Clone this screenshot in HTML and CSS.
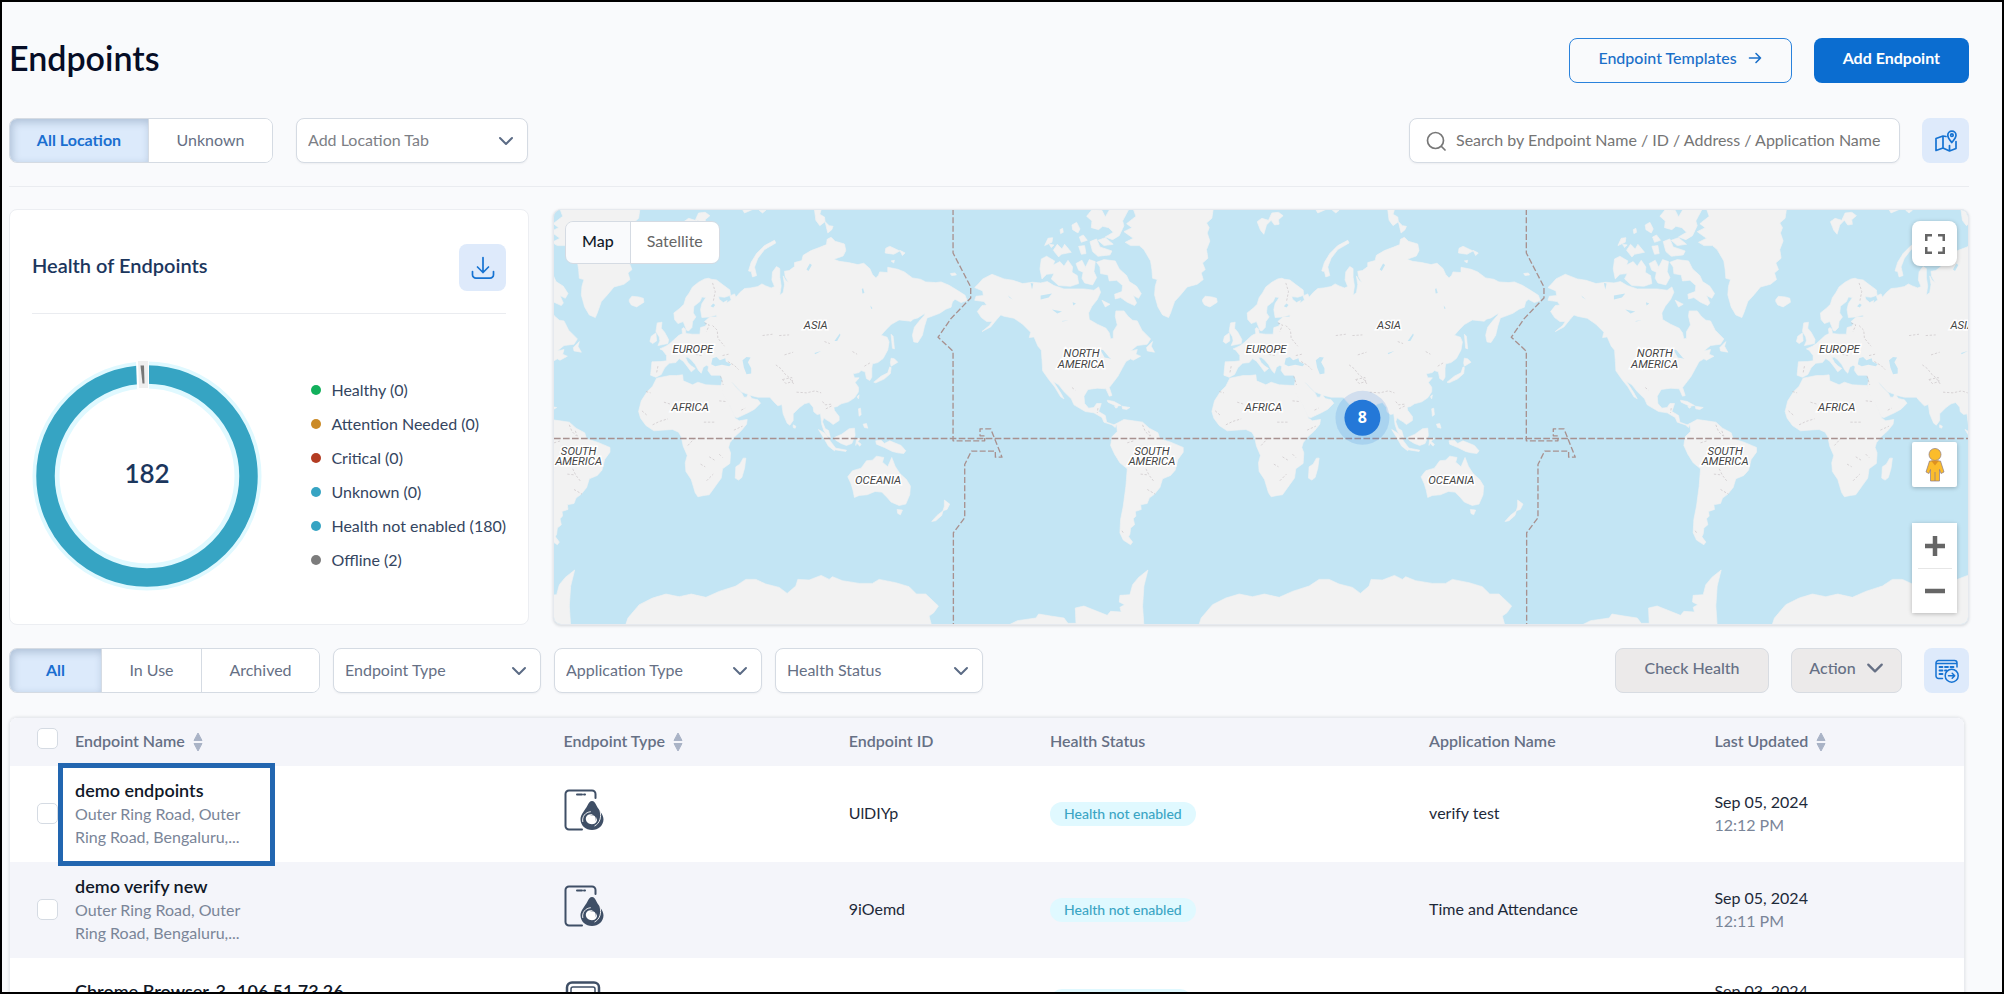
FILE: index.html
```html
<!DOCTYPE html>
<html lang="en">
<head>
<meta charset="utf-8">
<title>Endpoints</title>
<link rel="stylesheet" href="styles.css">
</head>
<body>
<svg class="defs" aria-hidden="true">
  <defs>
    <symbol id="chevron" viewBox="0 0 16 16"><path d="M2 5l6 6 6-6" fill="none" stroke="currentColor" stroke-width="2" stroke-linecap="round" stroke-linejoin="round"/></symbol>
    <symbol id="sort" viewBox="0 0 10 20"><path d="M5 1l4 7.500H1zM5 19l4-7.500H1z" fill="currentColor" stroke="currentColor" stroke-linejoin="round"/></symbol>
    <symbol id="device" viewBox="0 0 40 42">
      <path d="M31.500 9V5a3.500 3.500 0 0 0-3.500-3.500H5A3.500 3.500 0 0 0 1.500 5v32A3.500 3.500 0 0 0 5 40.500h13" fill="none" stroke="currentColor" stroke-width="2" stroke-linecap="round"/>
      <path d="M13 5.500h5M20 5.500h1" stroke="currentColor" stroke-width="2" stroke-linecap="round"/>
      <path fill="currentColor" d="M28 12c2 0 3.200 2 4.600 4.800 2.300 4.500 6.900 8.700 6.900 13.400C39.500 36.500 34.300 41 28 41S16.500 36.500 16.500 30.200c0-4.700 4.500-8.900 6.800-13.400C24.800 14 26 12 28 12z"/>
      <path fill="#fff" d="M29 25.500c-3 1-4.200 2.600-4.200 4.400 0 1.800 1.400 2.900 3.200 2.900 2.600 0 4.800-1.500 4.600-4.800 1.500 4.200-1 7.200-4.600 7.200-3.800 0-6.200-2.400-6.200-5.400 0-3.300 3-5.300 7.200-4.300z"/>
      <circle cx="28" cy="30" r="3.800" fill="#fff"/>
      <path d="M18.800 33c-1-5.500 2.500-9.800 8-10.300M36 21.500c1.800 7-.5 13-5.500 15.500" fill="none" stroke="#fff" stroke-width=".9"/>
    </symbol>
    <g id="world">
      <g transform="translate(-24 -30)">
        <path d="M318 487l27-1 17-2v-16l-12-16-8-4 18-8 12-8 13-12 13-12 12-6-2-14 4-4 6 4 2 14 20 2h22l2-20 14-4 6-8-8-6 16-14h20v-6l-22 6-22 2-4-24 4-18 12-18-12-2-6 14-18 14-2 20 8 12-10 14-2 18-10 10-6-2-10-26-16 6-10-12-2-20 18-14 12-12 6-20 10-14 10-18 18-14 18-10 12-2 8 3 16 2 18 14 22 16 2 16-18 6-18-2 2 8 12 10 12-6-2 8 14-10-4-12 14-6 4 10 12-14 14-12 18-2 22-4 12-8 12 6 16 6 10-4-8-20 2-24 12-16 10 6v26l4 26-4 28 10-8 4-24-4-26 8 14 8 6-10-18-2-16 14-2 16-12v-12l22-6 4-16 24-14 26-10 20-8 2-16 12-6 12 12 28 8 4 20-8 16-28 10 16 6 28 4 28 6 18-4 18 16 8 18 10 10 8-8 4-10 24 2v-16l30 6 20 8 24 18 24 4 16 8 30 2 16-2 24 10 26 16 22 14 6 16-18 6-18-10-8 8-4 16-16 6-18 12-26 10-12 4-8 26-6 26-14 22-12-2-4-20 6-24 14-18 16-18 2-6-22 14-14 4-6 6-36-4-24 14-16 16-14 16 18 6 6 14-4 24-14 26-16 12-16 4-2 14v26l-6 10-10-6-4-20-12-4-6 6-18 4 4 12h14l-12 14 10 14v14l-12 18-18 12-22 6-12 8-10 2 2 10 14 18v12l-18 12-10-8-10-6-8-6-4 12 8 20 10 6 6 22-10-6-10-16-6-18-4-32-10 2-10-8-2-14-12-14-14 4-16 12-18 18v20l-10 14-8-6-12-28-4-28-12 4-12-12-12-14h-36l-24-6-10-4-16-6-24-26-6-4 14 16 18 18 6 12h8l6-10 10 14 18 4 8 10-18 18-18 10-34 16-8-4-14-32-16-24-12-20v-12l6-24-6-12h-28l-10-14 2-12-6-4-10 6-6 18-8-8-10-18-12-14-10-8h-8l8 16 10 10 12 8-12 10-10-14-14-18-12-8-10 12-20 2-14 14-10 20-16 8-16-6z"/>
        <path d="M372 528h20l18-2 2 18 28 12 16-8 24 8 44 2 8 26 16 26 12 26 8 20 12 8 24-4-2 14-16 20-20 18-14 18-4 14 6 16-2 32-22 16-4 28-16 22-20 28-16 2-18 4-8-12-12-40-16-24-2-26 6-22-12-28-6-28-8-14-18-8-32 2-24 2-24-16-16-22-6-20 8-32 18-28 16-16 12-24z"/>
        <path d="M334 370l14-2-2 18 10 12 12 22-2 12-30 6 6-14-2-12-10-16zM330 400l-14 10-4 16 8 6 12-8zM250 300l8-10 20 2 14 4 2 12-22 14-16-6-6-10zM608 214l8-26 16-26 24-24 30-16 4 8-34 20-20 26-10 26 6 26-12 4-4-16zM600 776l-4 30-8 28-10 8-10-6 2-34 12-8 10-18zM414 66l14-10 20 6 10-22 20-2 14 10-14 12 2 14-14 2-10-14-14 14-8 28-10-12zM806 30h20l-4 14 14 8 2 14-16 12-12-16zM838 66l12 12 12 2-4 10-12 10zM1020 146l12-6 30 14-18 10-26-4zM1062 152l16 8-8 8zM1036 184l10-2-2 8zM1214 222l14-2 4 6-14 2zM590 30l34-2-28 12zM640 32h20l-10 8zM742 676l8 4-2 6-6-2zM818 690l20 12 18 26 12 16-2 10-18-14-14-24zM860 744l20 4 22 4-2 4-38-6zM866 714l22-10 22-16 16-2 2 22-10 24-16 6-16-6-16-10zM932 718l14-2-10 10 10 8-4 6-10-10-2 8zM938 628l6-2 2 20-6 4zM952 674l10-2 4 14-10-2zM934 592l6-6-2 12zM1036 504l-2 18-18 16-26 12-6-2 22-18 20-10 6-18zM1036 476l10 2 10 10-20 12-2-10zM1036 404l6 6 4 38-6-2zM990 724l16-2 10 10 16-8 34 14 14 16-6 8-18-2-16-4-24-12-24-10z"/>
        <path d="M906 832l14-18 26-8 16-22 18-2 12-12 22 4-4 14 16 14 12-28 10 26 14 22 20 18 12 20-2 26-12 28-20 4-24-10-12-14-16-16-20-2-24 10-24 2-14 6-4-20-6-20zM1054 930l16 2-6 14-8-4zM1196 902l16 12-8 16-12 4 4-14zM1192 934l-4 14-18 16-12 2 16-18z"/>
        <path d="M238 1280l8-24 34-40 40-20 40-12 40 8 36-8 44 10 40-18 50-16 30-20h30l30 14 40 10 24 18 26-22 6-20 34 2 36-14 24 12 10-8 30 12 50 8h40l20-12 50 10 40 12 22 22h28l38 36-14 20-14 10 8 30z"/>
        <g class="water">
          <path d="M496 494l4-18 12-4 10 10 16-6 2 10 16 8-6 6-22-4-20 4zM590 482l12-10 12 2-8 14 10 18v16l-14 2-8-20zM494 320l8-8 6 4-6 8zM866 424l16-22 2 4-10 18zM948 268l4-2 4 14-6 2zM974 318l6 8-4 2zM806 460l20-6-18 10zM782 210l10-18 6 4-10 18zM520 236l6-6 2 6z"/>
        </g>
        <path class="borders" d="M500 250l8 26-6 30M476 370l14 6-8 20M500 378l14 14 2 24 20 24M430 450l14 14 26 4M546 486l20 12 12 12M530 468l18-4M524 530l8 26M650 408l30-4M700 408l30-2M690 496l16 12 10 14 14 12 14 20M710 540l28-6 2 12-20 6zM752 578l30 2 26-6 18 6M716 466l26-8M836 426l16 6M920 456l14 8M956 500l20-12M300 576l14 4M354 608l20 6M288 634l16 14M320 676l20-10 26-8M474 668h32M520 604l20 2M564 692l26-12M426 738l20-22M482 844l20-20M490 772l16 10M464 794l14 8M520 764l10 10M586 632l12-6M830 606l8 10 18-2M840 628l20-10M336 500l-4 20"/>
      </g>
      <g transform="translate(1191 -30)">
        <path d="M84 252l12-14 28-14 36 14 26 4 30 10 30-4 24 2 20-4 20 12 30 10h60l30 4 14-10 6 16-10 22-16 20-10 20 2 20 24 14 26 12 10 14 4 18 8-2v-20l12-20-6-26 2-16h24l12 16 14 12 14 2 14 28 26 26-10 16-30 4-20 16 20-4-4 14 14 6-22 12-8-4-14 8-12 22-12 22-12 16-14 18 8 24-8 2-10-22-26-2-28 4-12 20 2 22 12 14 16-2 8-12h14l-8 24 20 12 4 20 22 8 8-4-4 12-10-8-24-8-6-14-24-14-26-4-34-20-8-18-22-22-16-20-16-10 22 34 10 18-10-6-18-30-16-20-20-28-2-34-2-28-10-12-12-28-14 2 4-16-24-24-26-18-30-6-10-4-12 14-18 22-26 14 22-18 8-12h-16l-16-12-12-18 14-18 14-2-8-10-28-4 4-12 22-2-2-14-24-10z"/>
        <path d="M498 672l22-12 28 4 28 4 20 18 26 14 6 18 32 10 38 16v14l-16 22-8 32-14 16-24 10-8 26-16 20-16 12-6 16-20 4 2 14-18 6 2 14-8 8 4 18-12 10-2 18-4 8 12 16-6 8-22-14-10-22 2-40 8-40 8-60 4-52-22-18-16-26-12-26 4-26 16-16z"/>
        <path d="M548 28h240l-4 28-16 14 8 14-6 16 8 24-10 26 4 26-16 14 8 20-12 10 6 20-18 14-30 8-20 24-18 20-12 34-6 14-18-8-14-24-10-36 2-26 6-20-14-4-2-26-4-26-20-34-14-12h-26l-16-10 24-12-28-20 24-12-16-12 28-22zM408 50l16-20 30 2 10 20 14-24 56 2-18 34 4 14-14 30-20 12-22-8 24-14-14-14-18-4-12 10-22-6 2-20zM364 76l14-8 10 20-6 12-16-10zM328 90l8-4 2 12-8 4zM282 138l10-22 14-2-2 14zM296 134l14 2-8 8zM308 152l12-18 14 14 8-14 20 24-30 6-8 8zM386 112l12-6 12 16-18 6zM384 140l18-2 4 24-14 2zM418 126l20-8 10 24 36 12-6 12-36 4-16-14zM442 122l22-8 24 20-28 4zM268 208l4-30 16-8 24 14-4 12 20-10 12 14 12-18 14 20-2 16 16 10 4 24-24 8-36-2-22-20 8-16-22 2-14 14zM376 192l18-10 10 20-6 16-14-6zM398 216l18-36 18 6-4 30 8 18-12 22-24-6-8-14zM438 188l22-8 34 4 12 24 22 20 8 18 22 14 14 22-8 14-16-8 10 22-6 8-22-10-20-14-16 4-2-14 22-8 2-18-18-16-22 2-4-18-22-4-2-20zM454 302l24 12-14 8zM588 444l18-18-4 14 10 18-22-4zM470 602l20 4 22 12-14 2-26-12zM514 620l24 4-10 6-12-2zM492 620l10 2-6 4z"/>
        <path d="M168 1280l32-16 56-8 8-12 36 6 40 6 12 16h24l-2-46 26-6 30 12 40 16 10-12 32 2-4-14 14-8-16-8 2-20 30-2 8-30 18-22 28-22-12 48-4 60 4 60z"/>
        <g class="water"><path d="M270 288l34-6-10 12-24 6zM304 330l30 6-14 6zM334 364l20-2-18 4zM172 288l14 12-10-6zM448 448l10 4 18 22 6 4-20-4zM366 308l10 4-8 6zM240 250l4 20 4-18z"/></g>
        <path class="borders" d="M576 676l8 20 14 14M594 694l6 16M586 808l10 20 14 18M570 824l20 2M590 870l24 14M364 564l10 8M442 626l-2 14M514 994l4 6M530 730l20-6"/>
        <path class="dateline" d="M7 28v132l53 102v33L0 358l-38 55 45 42v269h95v-15H88v-21h32l34 85h-20v-18H62l-20 40v160L8 1000v280"/>
      </g>
    </g>
  </defs>
</svg>

<main class="page">
  <header class="page-head">
    <h1>Endpoints</h1>
    <div class="head-actions">
      <a class="btn btn-outline" href="#templates">Endpoint Templates
        <svg class="icon-sm" viewBox="0 0 16 16"><path d="M2.500 8h11M9 3.500L13.500 8 9 12.500" fill="none" stroke="currentColor" stroke-width="1.600" stroke-linecap="round" stroke-linejoin="round"/></svg>
      </a>
      <button class="btn btn-primary" type="button">Add Endpoint</button>
    </div>
  </header>

  <section class="toolbar toolbar-top">
    <div class="tabs">
      <button class="tab tab-location active" type="button">All Location</button>
      <button class="tab tab-unknown" type="button">Unknown</button>
    </div>
    <div class="select-box select-location">
      <select aria-label="Add Location Tab"><option>Add Location Tab</option></select>
      <svg><use href="#chevron"/></svg>
    </div>
    <label class="search">
      <svg viewBox="0 0 20 20"><circle cx="9.500" cy="9.500" r="8" fill="none" stroke="currentColor" stroke-width="1.700"/><path d="M15.500 15.500l3.500 3.500" stroke="currentColor" stroke-width="1.700" stroke-linecap="round"/></svg>
      <input type="search" aria-label="Search" placeholder="Search by Endpoint Name / ID / Address / Application Name">
    </label>
    <button class="icon-btn" type="button" aria-label="Toggle map">
      <svg viewBox="0 0 24 24" fill="none" stroke="currentColor" stroke-width="1.700" stroke-linejoin="round" stroke-linecap="round"><path d="M12 7.500L9 7 2 9.500v12L9 19l6.500 3 6.500-2.500v-7M9 7v12M15.500 16.500V22"/><path d="M17.800 13.500c-1.500-2-4-4.500-4-7.300a4.100 4.100 0 0 1 8.200 0c0 2.800-2.700 5.300-4.200 7.300z"/><circle cx="17.900" cy="6.200" r="1.300"/></svg>
    </button>
  </section>

  <section class="overview">
    <article class="card">
      <header class="card-head">
        <h2>Health of Endpoints</h2>
        <button class="icon-btn" type="button" aria-label="Download">
          <svg viewBox="0 0 24 24" fill="none" stroke="currentColor" stroke-width="1.700" stroke-linecap="round" stroke-linejoin="round"><path d="M12 1.500v15M6.500 11l5.500 5.500 5.500-5.500M1.500 15.500v3.200a3.500 3.500 0 0 0 3.500 3.500h14a3.500 3.500 0 0 0 3.500-3.500v-3.200"/></svg>
        </button>
      </header>
      <div class="health">
        <svg class="donut" viewBox="0 0 230 230" role="img" aria-label="182 endpoints">
          <circle cx="115" cy="115" r="101" fill="none" stroke="#e0f9ff" stroke-width="27"/>
          <circle cx="115" cy="115" r="101.500" fill="none" stroke="#36a4c3" stroke-width="18.500"/>
          <path d="M104 0h13v28h-12z" fill="#fff"/>
          <path d="M106 0h10v27h-9z" fill="#efefef"/>
          <path d="M108.500 4.500h3.500l.5 18h-2z" fill="#777"/>
          <text x="115" y="122" text-anchor="middle">182</text>
        </svg>
        <ul class="legend">
          <li><i class="dot green"></i>Healthy (0)</li>
          <li><i class="dot amber"></i>Attention Needed (0)</li>
          <li><i class="dot red"></i>Critical (0)</li>
          <li><i class="dot teal"></i>Unknown (0)</li>
          <li><i class="dot teal"></i>Health not enabled (180)</li>
          <li><i class="dot gray"></i>Offline (2)</li>
        </ul>
      </div>
    </article>

    <div class="map">
      <svg class="map-canvas" viewBox="0 0 4245 1245" preserveAspectRatio="xMidYMid slice">
        <g class="land">
          <use href="#world" x="-1721"/><use href="#world"/><use href="#world" x="1721"/><use href="#world" x="3442"/>
        </g>
        <path class="dateline equator" d="M0 687h4245"/>
        <g class="labels">
          <text x="786" y="357">ASIA</text><text x="417" y="431">EUROPE</text><text x="409" y="605">AFRICA</text><text x="973" y="824">OCEANIA</text>
          <text x="74" y="736">SOUTH</text><text x="74" y="766">AMERICA</text>
          <text x="1584" y="441">NORTH</text><text x="1583" y="474">AMERICA</text>
          <text x="1795" y="736">SOUTH</text><text x="1795" y="766">AMERICA</text>
          <text x="2507" y="357">ASIA</text><text x="2138" y="431">EUROPE</text><text x="2130" y="605">AFRICA</text><text x="2694" y="824">OCEANIA</text>
          <text x="3305" y="441">NORTH</text><text x="3304" y="474">AMERICA</text>
          <text x="3516" y="736">SOUTH</text><text x="3516" y="766">AMERICA</text>
          <text x="4228" y="357">ASIA</text><text x="3859" y="431">EUROPE</text><text x="3851" y="605">AFRICA</text>
        </g>
        <circle cx="2427" cy="625" r="81" fill="#2478d8" opacity=".16"/>
        <circle cx="2427" cy="625" r="54" fill="#2478d8"/>
        <text class="cluster" x="2427" y="640">8</text>
      </svg>
      <div class="map-type">
        <button class="on" type="button">Map</button><button type="button">Satellite</button>
      </div>
      <div class="map-controls">
        <button class="map-btn fullscreen" type="button" aria-label="Fullscreen"><svg viewBox="0 0 20 20" fill="none" stroke="#666" stroke-width="2.500"><path d="M1.250 7V1.250H7M13 1.250h5.750V7M18.750 13v5.750H13M7 18.750H1.250V13"/></svg></button>
        <button class="map-btn pegman" type="button" aria-label="Street view"><svg viewBox="0 0 20 34" fill="#fbbc2b" stroke="#8a7a8a" stroke-width=".7"><path d="M4.500 13h11l3.500 11-3 1.500-1.500-4V33h-9V21.500l-1.500 4-3-1.500z"/><path d="M10 24v9"/><circle cx="10" cy="6.500" r="6"/><path d="M6 12.500h8l-4 5z" fill="#dd9120" stroke="none"/></svg></button>
        <div class="zoom">
          <button type="button" aria-label="Zoom in"><svg viewBox="0 0 20 20"><path d="M0 10h20M10 0v20" stroke="#666" stroke-width="4.500"/></svg></button>
          <button type="button" aria-label="Zoom out"><svg viewBox="0 0 20 20"><path d="M0 10h20" stroke="#666" stroke-width="4.500"/></svg></button>
        </div>
      </div>
    </div>
  </section>

  <section class="toolbar toolbar-list">
    <div class="tabs">
      <button class="tab tab-all active" type="button">All</button>
      <button class="tab tab-use" type="button">In Use</button>
      <button class="tab tab-archived" type="button">Archived</button>
    </div>
    <div class="select-box"><select aria-label="Endpoint Type"><option>Endpoint Type</option></select><svg><use href="#chevron"/></svg></div>
    <div class="select-box"><select aria-label="Application Type"><option>Application Type</option></select><svg><use href="#chevron"/></svg></div>
    <div class="select-box"><select aria-label="Health Status"><option>Health Status</option></select><svg><use href="#chevron"/></svg></div>
    <div class="list-actions">
      <button class="btn btn-muted btn-check" type="button">Check Health</button>
      <button class="btn btn-muted btn-action" type="button">Action <svg class="icon-md"><use href="#chevron"/></svg></button>
      <button class="icon-btn" type="button" aria-label="Export list">
        <svg viewBox="0 0 24 24" fill="none" stroke="currentColor" stroke-width="1.500" stroke-linecap="round" stroke-linejoin="round"><path d="M7.500 19.500H3.500a2.500 2.500 0 0 1-2.500-2.500V4a2.500 2.500 0 0 1 2.500-2.500h16A2.500 2.500 0 0 1 22 4v4M1 4.500h21"/><path d="M4.500 8h3M10 8h3M15.500 8h3M4.500 11.500h3M10 11.500h1.500M4.500 15h3" stroke-width="1.800"/><circle cx="16.700" cy="16.700" r="6.500"/><path d="M13.500 16.700h6M17.200 14.200l2.500 2.500-2.500 2.500"/></svg>
      </button>
    </div>
  </section>

  <div class="table-card">
    <table>
      <colgroup><col class="c-check"><col class="c-name"><col class="c-type"><col class="c-id"><col class="c-health"><col class="c-app"><col></colgroup>
      <thead>
        <tr>
          <th><input type="checkbox" aria-label="Select all"></th>
          <th>Endpoint Name <svg class="sort"><use href="#sort"/></svg></th>
          <th>Endpoint Type <svg class="sort"><use href="#sort"/></svg></th>
          <th>Endpoint ID</th>
          <th>Health Status</th>
          <th>Application Name</th>
          <th>Last Updated <svg class="sort"><use href="#sort"/></svg></th>
        </tr>
      </thead>
      <tbody>
        <tr>
          <td><input type="checkbox" aria-label="Select demo endpoints"></td>
          <td class="name-cell"><span class="highlight"></span><strong>demo endpoints</strong><span class="sub">Outer Ring Road, Outer<br>Ring Road, Bengaluru,...</span></td>
          <td class="device-cell"><svg class="device"><use href="#device"/></svg></td>
          <td>UlDIYp</td>
          <td class="badge-cell"><span class="badge">Health not enabled</span></td>
          <td>verify test</td>
          <td>Sep 05, 2024<span class="sub">12:12 PM</span></td>
        </tr>
        <tr>
          <td><input type="checkbox" aria-label="Select demo verify new"></td>
          <td class="name-cell"><strong>demo verify new</strong><span class="sub">Outer Ring Road, Outer<br>Ring Road, Bengaluru,...</span></td>
          <td class="device-cell"><svg class="device"><use href="#device"/></svg></td>
          <td>9iOemd</td>
          <td class="badge-cell"><span class="badge">Health not enabled</span></td>
          <td>Time and Attendance</td>
          <td>Sep 05, 2024<span class="sub">12:11 PM</span></td>
        </tr>
        <tr class="short">
          <td></td>
          <td class="name-cell"><strong>Chrome Browser-3 -106.51.73.26</strong><span class="sub">&nbsp;</span></td>
          <td class="device-cell"><svg class="device" viewBox="0 0 40 42" fill="none" stroke="currentColor"><rect x="3" y="1.500" width="32" height="38" rx="5" stroke-width="2.500"/><rect x="7" y="6" width="24" height="28" rx="2" stroke-width="1.500"/><path d="M16 13h1" stroke-width="2"/></svg></td>
          <td></td>
          <td class="badge-cell"><span class="badge badge-blank"></span></td>
          <td></td>
          <td>Sep 03, 2024<span class="sub">&nbsp;</span></td>
        </tr>
      </tbody>
    </table>
  </div>
</main>
</body>
</html>
```

FILE: styles.css
```css
* { box-sizing: border-box; }

body {
  margin: 0;
  height: 100vh;
  overflow: hidden;
  border: 2px solid #000;
  background: #f9fafc;
  color: #1d2939;
  font: 400 16px/22px Lato, "Open Sans", sans-serif;
}

button, input, select { font: inherit; color: inherit; }
button { cursor: pointer; }
.defs { position: absolute; width: 0; height: 0; }

.page { padding: 36px 33px 0 7px; }

.page-head {
  display: flex;
  align-items: center;
  justify-content: space-between;
  height: 45px;
}

h1 {
  margin: 0;
  padding-bottom: 6px;
  color: #060d26;
  font-size: 34px;
  font-weight: 600;
  line-height: 40px;
}

.head-actions, .list-actions { display: flex; gap: 22px; }

.btn {
  display: inline-flex;
  align-items: center;
  justify-content: center;
  height: 45px;
  padding: 0 28px 5px;
  border: 1px solid transparent;
  border-radius: 8px;
  text-decoration: none;
}
.btn svg { flex: none; }
.btn-outline { gap: 10px; border-color: #2a82dc; color: #1a6fc9; font-weight: 500; }
.btn-primary { background: #0b6dd0; color: #fff; font-weight: 700; }
.btn-muted { gap: 10px; border-color: #d8dce2; background: #eceaea; color: #667085; font-weight: 500; }
.btn-check { width: 154px; }
.btn-action { width: 111px; padding: 0 16px 5px; }
.icon-sm { width: 16px; height: 16px; }
.icon-md { width: 18px; height: 18px; }

.icon-btn {
  display: grid;
  place-items: center;
  width: 47px;
  height: 45px;
  padding: 0;
  border: 0;
  border-radius: 8px;
  background: #deeafb;
  color: #1673d2;
}
.icon-btn svg { width: 24px; height: 24px; }

.toolbar { display: flex; align-items: center; }
.toolbar-top { margin-top: 35px; padding-bottom: 23px; border-bottom: 1px solid #eaecf0; }

.tabs {
  display: flex;
  height: 45px;
  overflow: hidden;
  border: 1px solid #d5dbe3;
  border-radius: 8px;
  background: #fff;
}
.tab {
  padding: 0 0 2px;
  border: 0;
  border-left: 1px solid #d5dbe3;
  background: #fff;
  color: #667085;
}
.tab:first-child { border-left: 0; }
.tab.active {
  background: #dceafb;
  color: #1a6fd0;
  font-weight: 700;
  box-shadow: inset 2px 3px 8px rgba(50, 80, 120, .28);
}
.tab-location { width: 138px; }
.tab-unknown { width: 124px; }
.tab-all { width: 91px; }
.tab-use { width: 100px; }
.tab-archived { width: 118px; }

.select-box { display: grid; width: 208px; height: 45px; align-items: center; }
.select-box > * { grid-area: 1 / 1; }
.select-box select {
  width: 100%;
  height: 100%;
  padding: 0 40px 2px 11px;
  appearance: none;
  border: 1px solid #d5dbe3;
  border-radius: 8px;
  background: #fff;
  color: #667085;
  box-shadow: 0 1px 2px rgba(16, 24, 40, .05);
}
.select-box svg {
  justify-self: end;
  width: 16px;
  height: 16px;
  margin-right: 14px;
  color: #5b6b85;
  pointer-events: none;
}
.select-location { width: 232px; margin-left: 23px; }
.select-location select { color: #7d7f86; }

.search {
  display: flex;
  align-items: center;
  gap: 10px;
  width: 491px;
  height: 45px;
  margin: 0 22px 0 auto;
  padding: 0 4px 0 16px;
  border: 1px solid #d5dbe3;
  border-radius: 8px;
  background: #fff;
  box-shadow: 0 1px 2px rgba(16, 24, 40, .05);
}
.search svg { flex: none; width: 20px; height: 20px; color: #777; }
.search input { flex: 1; min-width: 0; padding: 0 0 2px; border: 0; outline: 0; background: none; appearance: none; }
.search input::-webkit-search-cancel-button { display: none; }
.search input::placeholder { color: #757575; opacity: 1; }

.overview { display: flex; gap: 24px; margin-top: 22px; }

.card {
  flex: none;
  width: 520px;
  height: 416px;
  padding: 34px 22px 0;
  border: 1px solid #eceef2;
  border-radius: 8px;
  background: #fff;
}
.card-head {
  display: flex;
  align-items: center;
  justify-content: space-between;
  padding-bottom: 22px;
  border-bottom: 1px solid #eaecf0;
}
.card-head .icon-btn { height: 47px; }
h2 { margin: 0; padding-bottom: 5px; color: #1b365d; font-size: 20px; font-weight: 600; line-height: 24px; }

.health { display: flex; align-items: center; justify-content: space-between; margin-top: 47px; }
.donut { width: 230px; height: 230px; }
.donut text { fill: #1b365d; font-size: 26px; font-weight: 600; }
.legend { display: grid; gap: 12px; margin: 0; padding: 0 0 2px; list-style: none; color: #344560; }
.legend li { display: flex; align-items: center; gap: 10px; white-space: nowrap; }
.dot { width: 10px; height: 10px; border-radius: 50%; }
.green { background: #12b05c; }
.amber { background: #cb8a26; }
.red { background: #b33c22; }
.teal { background: #36a4c3; }
.gray { background: #7c7c7c; }

.map {
  position: relative;
  flex: 1;
  height: 416px;
  overflow: hidden;
  border: 1px solid #e6e9ee;
  border-radius: 8px;
  background: #c3e5f4;
  box-shadow: 0 1px 3px rgba(16, 24, 40, .15);
}
.map-canvas { display: block; width: 100%; height: 100%; }
.land { fill: #f2f2f2; stroke: #f2f2f2; stroke-width: 2; stroke-linejoin: round; }
.water { fill: #c3e5f4; stroke: none; }
.borders { fill: none; stroke: #c9c2c6; stroke-width: 2; stroke-dasharray: 7 5; }
.dateline { fill: none; stroke: #a8918f; stroke-width: 4; stroke-dasharray: 18 7; }
.equator { stroke-dasharray: 20 7; }
.labels {
  fill: #444;
  stroke: #fff;
  stroke-width: 9;
  paint-order: stroke;
  font: italic 400 34px Roboto, sans-serif;
  text-anchor: middle;
}
.cluster { fill: #fff; font: 700 48px "Open Sans", sans-serif; text-anchor: middle; }

.map-type {
  position: absolute;
  top: 11px;
  left: 11px;
  display: flex;
  height: 43px;
  overflow: hidden;
  border: 1px solid #d5dbe3;
  border-radius: 8px;
}
.map-type button { padding: 0 16px 3px; border: 0; background: #fff; color: #666; }
.map-type .on { border-right: 1px solid #d5dbe3; background: #f9fafc; color: #101828; font-weight: 500; }

.map-controls { position: absolute; top: 11px; right: 11px; width: 45px; }
.map-btn, .zoom button { display: grid; place-items: center; width: 45px; height: 45px; padding: 0; border: 0; background: #fff; }
.map-btn, .zoom { border-radius: 2px; box-shadow: 0 1px 4px rgba(0, 0, 0, .25); }
.map-btn.fullscreen { border-radius: 8px; }
.map-controls svg { width: 20px; height: 20px; }
.map-btn.pegman { margin: 176px 0 36px; }
.map-controls .pegman svg { height: 34px; }
.zoom button + button { background: linear-gradient(#e6e6e6, #e6e6e6) center top / 34px 1px no-repeat #fff; }

.toolbar-list { gap: 13px; margin-top: 23px; }
.list-actions { margin-left: auto; }
.list-actions .icon-btn { width: 45px; }

.table-card {
  margin: 24px 4px 0 0;
  overflow: hidden;
  border: 1px solid #e9ebef;
  border-radius: 8px 8px 0 0;
  box-shadow: 0 0 3px rgba(16, 24, 40, .12);
}
table { width: 100%; table-layout: fixed; border-collapse: collapse; background: #fff; }
.c-check { width: 57px; }
.c-name { width: 25%; }
.c-type { width: 14.6%; }
.c-id { width: 10.3%; }
.c-health { width: 19.4%; }
.c-app { width: 14.6%; }
th { height: 48px; padding: 0 8px 2px; background: #f4f5fa; color: #667085; font-weight: 600; text-align: left; }
td { height: 96px; padding: 0 8px 2px; vertical-align: middle; }
.short td { height: 91px; }
tbody tr:nth-child(even) { background: #f4f5fa; }
th:first-child, td:first-child { padding-left: 27px; }
th:first-child { padding-bottom: 7px; }
.device-cell { padding-bottom: 8px; }
.short .device-cell { padding-bottom: 3px; }
.badge-cell { padding-bottom: 0; }

input[type="checkbox"] {
  display: block;
  width: 21px;
  height: 21px;
  margin: 0;
  appearance: none;
  border: 1px solid #d5dbe3;
  border-radius: 5px;
  background: #fff;
}
.sort { width: 10px; height: 20px; margin-left: 4px; color: #a9b3c6; vertical-align: middle; }
.name-cell { position: relative; }
.name-cell strong { display: block; color: #101828; font-size: 18px; font-weight: 600; line-height: 23px; }
.sub { display: block; color: #7a8598; line-height: 23px; }
.highlight {
  position: absolute;
  top: -3px;
  left: -9px;
  width: 217px;
  height: 103px;
  border: 5px solid #2266b0;
}
.device { display: block; width: 40px; height: 42px; color: #3f4f66; }
.badge {
  display: inline-block;
  padding: 0 14px;
  border-radius: 12px;
  background: #e0f9ff;
  color: #3ba5c4;
  font-size: 14px;
  font-weight: 500;
  line-height: 24px;
}
.badge-blank { width: 142px; height: 24px; }
```
